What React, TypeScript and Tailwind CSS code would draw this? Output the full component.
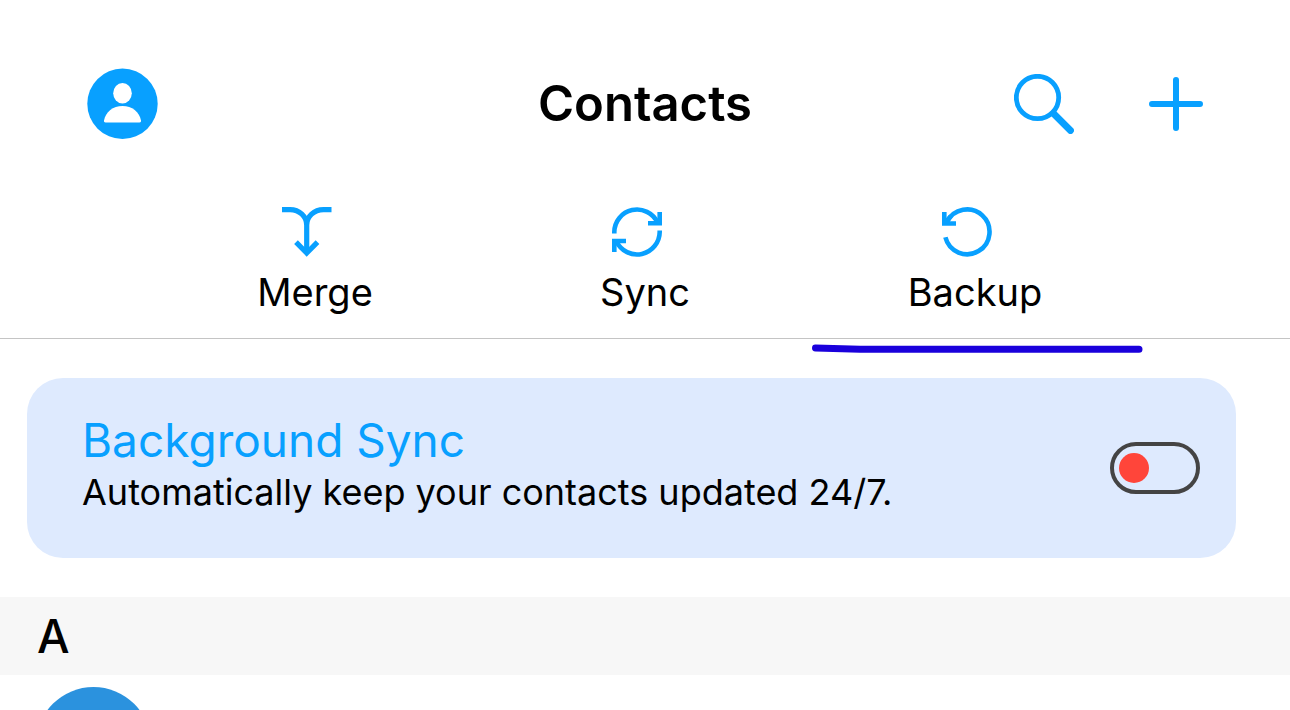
import React, { useState } from 'react';

function ProfileIcon() {
  return (
    <svg viewBox="0 0 71 71" className="h-[71px] w-[71px]" aria-hidden="true">
      <circle cx="35.5" cy="35.8" r="35.2" fill="#08a0ff" />
      <ellipse cx="35.5" cy="25.3" rx="9.3" ry="10.2" fill="#fff" />
      <path d="M18.5 54.5c-1.200 0-1.700-.8-1.500-2C18.500 44 26 38 35.500 38S52.500 44 54 52.500c.2 1.200-.3 2-1.500 2z" fill="#fff" />
    </svg>
  );
}

function SearchIcon() {
  return (
    <svg viewBox="0 0 60 60" className="h-[60px] w-[60px]" fill="none" stroke="#08a0ff" aria-hidden="true">
      <circle cx="23.500" cy="23.500" r="21.200" strokeWidth="4.800" />
      <path d="M39.500 39.500 56.500 56.500" strokeWidth="6.800" strokeLinecap="round" />
    </svg>
  );
}

function PlusIcon() {
  return (
    <svg viewBox="0 0 54 54" className="h-[54px] w-[54px]" fill="none" stroke="#08a0ff" strokeWidth="6" strokeLinecap="round" aria-hidden="true">
      <path d="M27 3v48M3 27h48" />
    </svg>
  );
}

function MergeIcon() {
  return (
    <svg viewBox="0 0 50 50" className="h-[50px] w-[50px]" fill="none" stroke="#08a0ff" strokeWidth="5.200" aria-hidden="true">
      <path d="M0 2.600h8C17.500 2.600 24.700 9.500 24.700 18v27M49.500 2.600h-8C32 2.600 24.700 9.500 24.700 18" />
      <path d="M14 35.200 24.700 46 35.500 35.200" />
    </svg>
  );
}

function SyncIcon() {
  return (
    <svg viewBox="0 0 50 50" className="h-[50px] w-[50px]" fill="none" stroke="#08a0ff" strokeWidth="4.600" aria-hidden="true">
      <path d="M2.300 26.500V25A22.700 22.700 0 0 1 45.500 15.500" />
      <path d="M47.700 5v11.300H36" />
      <path d="M47.700 23.500V25A22.700 22.700 0 0 1 4.500 34.500" />
      <path d="M2.300 45V34H14" />
    </svg>
  );
}

function BackupIcon() {
  return (
    <svg viewBox="0 0 50 50" className="h-[50px] w-[50px]" fill="none" stroke="#08a0ff" strokeWidth="4.600" aria-hidden="true">
      <path d="M5 15A22.400 22.400 0 1 1 3.400 30.300" />
      <path d="M2.300 5v11.500H14" />
      <path d="M3 16 9 9" />
    </svg>
  );
}

const tabs = [
  { label: 'Merge', icon: <MergeIcon /> },
  { label: 'Sync', icon: <SyncIcon /> },
  { label: 'Backup', icon: <BackupIcon /> },
];

export default function App() {
  const [activeTab, setActiveTab] = useState('Backup');
  const [backgroundSync, setBackgroundSync] = useState(false);

  return (
    <div className="h-screen overflow-hidden bg-white font-['Inter',sans-serif] text-black">
      {/* Title bar */}
      <header className="grid grid-cols-3 items-center px-[87px] pt-[68px]">
        <button type="button" aria-label="Profile" className="justify-self-start">
          <ProfileIcon />
        </button>
        <h1 className="text-center text-[49px] leading-[60px] font-semibold">Contacts</h1>
        <div className="flex items-center gap-[75px] justify-self-end">
          <button type="button" aria-label="Search">
            <SearchIcon />
          </button>
          <button type="button" aria-label="Add contact">
            <PlusIcon />
          </button>
        </div>
      </header>

      {/* Actions */}
      <nav className="grid grid-cols-3 border-b border-[#c4c4c4] px-[150px] pt-[68px]">
        {tabs.map((tab) => (
          <button
            key={tab.label}
            type="button"
            onClick={() => setActiveTab(tab.label)}
            className="relative flex flex-col items-center gap-[11px] pb-[22px]"
          >
            <span className="pr-4">{tab.icon}</span>
            <span className="text-[38px] leading-[48px]">{tab.label}</span>
            {activeTab === tab.label && (
              <svg viewBox="0 0 330 10" className="absolute top-full left-0.5 mt-1.5 w-full overflow-visible" fill="none" aria-hidden="true">
                <path d="M3.500 4 48 5.300H327" stroke="#1a00dc" strokeWidth="7" strokeLinecap="round" strokeLinejoin="round" />
              </svg>
            )}
          </button>
        ))}
      </nav>

      <main>
        {/* Background sync card */}
        <section className="mt-[39px] mr-[54px] ml-[27px] flex items-center justify-between rounded-[36px] bg-[#deeafe] pr-9 pl-[55px]">
          <div className="pt-[34px] pb-[42px]">
            <label htmlFor="background-sync" className="block text-[46px] leading-[56px] text-[#08a0ff]">
              Background Sync
            </label>
            <p className="text-[36px] leading-[48px]">Automatically keep your contacts updated 24/7.</p>
          </div>
          <input
            id="background-sync"
            type="checkbox"
            role="switch"
            checked={backgroundSync}
            onChange={(e) => setBackgroundSync(e.target.checked)}
            className="flex h-[52px] w-[90px] appearance-none items-center rounded-full border-4 border-[#444444] px-[5px] before:h-[30px] before:w-[30px] before:rounded-full before:bg-[#ff453a] checked:justify-end checked:before:bg-green-500"
          />
        </section>

        {/* Contact list */}
        <section className="mt-[39px]">
          <h2 className="bg-[#f7f7f7] pl-[37px] text-[46px] leading-[78px] font-medium">A</h2>
          <div className="px-9 pt-3">
            <div className="h-[115px] w-[115px] rounded-full bg-[#2b92de]" />
          </div>
        </section>
      </main>
    </div>
  );
}
